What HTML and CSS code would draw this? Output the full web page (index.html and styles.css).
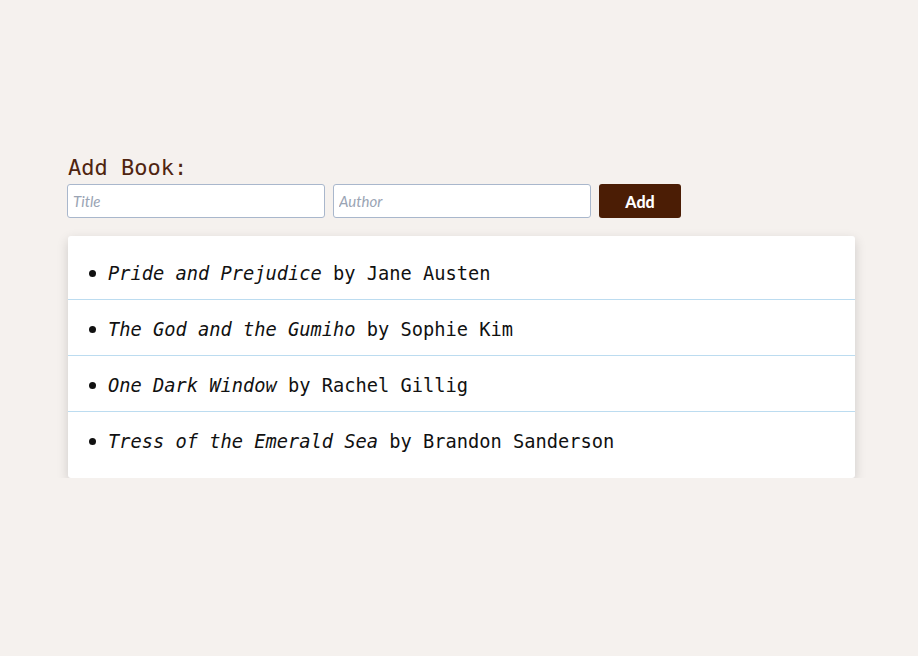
FILE: index.html
```html
<!DOCTYPE html>
<html>
<head>
<meta charset="utf-8">
<link rel="stylesheet" href="styles.css">
</head>
<body>
<main class="app">
  <h2 class="form-title">Add Book:</h2>
  <form class="book-form">
    <input class="field" type="text" placeholder="Title">
    <input class="field" type="text" placeholder="Author">
    <button class="add-btn" type="button">Add</button>
  </form>
  <ul class="book-list">
    <li class="book"><span><em>Pride and Prejudice</em> by Jane Austen</span></li>
    <li class="book"><span><em>The God and the Gumiho</em> by Sophie Kim</span></li>
    <li class="book"><span><em>One Dark Window</em> by Rachel Gillig</span></li>
    <li class="book"><span><em>Tress of the Emerald Sea</em> by Brandon Sanderson</span></li>
  </ul>
</main>
</body>
</html>
```
FILE: styles.css
```css
html, body {
  margin: 0;
  padding: 0;
  background: #f5f1ee;
}
.app {
  margin: 0 63px 0 67px;
  padding-top: 155px;
  font-family: "DejaVu Sans Mono", "Liberation Mono", monospace;
}
.form-title {
  margin: 0 0 3px 1px;
  font-size: 22px;
  line-height: 26px;
  font-weight: normal;
  color: #4f2410;
}
.book-form {
  display: flex;
  gap: 8px;
  margin: 0 0 18px 0;
}
.field {
  box-sizing: border-box;
  width: 258px;
  height: 34px;
  border: 1px solid #a9b7cc;
  border-radius: 3px;
  background: #fff;
  padding: 0 5px;
  font-family: Lato, "Open Sans", sans-serif;
  font-size: 15px;
}
.field::placeholder {
  color: #9aa4b4;
  font-style: italic;
}
.add-btn {
  box-sizing: border-box;
  width: 82px;
  height: 34px;
  border: none;
  border-radius: 3px;
  background: #4b1d05;
  color: #fff;
  font-family: Lato, "Open Sans", sans-serif;
  font-weight: 900;
  font-size: 16px;
}
.book-list {
  list-style: none;
  margin: 0 0 0 1px;
  padding: 8px 0 11px;
  background: #fff;
  border-radius: 3px;
  box-shadow: 0 4px 12px rgba(0, 0, 0, 0.16);
}
.book {
  box-sizing: border-box;
  display: flex;
  align-items: center;
  gap: 12px;
  height: 56px;
  padding: 4px 0 0 21px;
  font-size: 18.7px;
  color: #111;
  border-bottom: 1px solid #bcdcf0;
  white-space: pre;
}
.book:last-child {
  border-bottom: none;
  height: 55px;
}
.book::before {
  content: "";
  width: 7px;
  height: 7px;
  border-radius: 50%;
  background: #111;
  flex: none;
}
.book em {
  font-style: italic;
}
```
